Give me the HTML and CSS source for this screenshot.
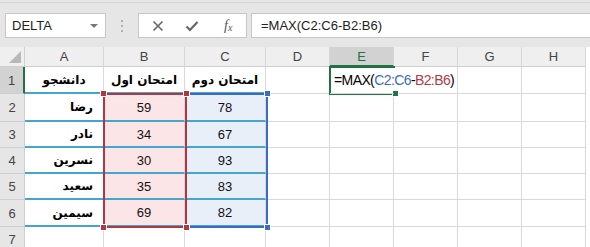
FILE: index.html
```html
<!DOCTYPE html>
<html lang="en">
<head>
  <meta charset="UTF-8">
  <title>Sheet</title>
  <link rel="stylesheet" href="styles.css">
</head>
<body>

  <div class="toolbar">
    <div class="namebox">
      <span>DELTA</span>
      <span class="caret"></span>
    </div>
    <div class="grip"><i></i><i></i><i></i></div>
    <div class="fnbox">
      <svg width="12" height="12" viewBox="0 0 12 12"><path d="M1.5 1.5 L10.5 10.5 M10.5 1.5 L1.5 10.5" stroke="#666" stroke-width="1.6" fill="none"/></svg>
      <svg width="14" height="12" viewBox="0 0 14 12"><path d="M1.5 6.5 L5 10 L12.5 2" stroke="#666" stroke-width="2.2" fill="none"/></svg>
      <span class="fx">f<sub>x</sub></span>
    </div>
    <div class="formula">=MAX(C2:C6-B2:B6)</div>
  </div>

  <div class="sheet">
    <div class="grid">
      <!-- header row -->
      <div class="corner"><span></span></div>
      <div class="colhead">A</div>
      <div class="colhead">B</div>
      <div class="colhead">C</div>
      <div class="colhead">D</div>
      <div class="colhead active">E</div>
      <div class="colhead">F</div>
      <div class="colhead">G</div>
      <div class="colhead">H</div>

      <!-- row 1 -->
      <div class="rowhead active">1</div>
      <div class="cell ar tbl center">دانشجو</div>
      <div class="cell ar tbl center">امتحان اول</div>
      <div class="cell ar tbl center">امتحان دوم</div>
      <div class="cell"></div>
      <div class="cell edit">=MAX(<span class="ref-c">C2:C6</span>-<span class="ref-b">B2:B6</span>)<span class="cursor"></span></div>
      <div class="cell"></div>
      <div class="cell"></div>
      <div class="cell"></div>

      <!-- row 2 -->
      <div class="rowhead">2</div>
      <div class="cell ar tbl name">رضا</div>
      <div class="cell tbl num pink">59</div>
      <div class="cell tbl num blue">78</div>
      <div class="cell"></div><div class="cell"></div><div class="cell"></div><div class="cell"></div><div class="cell"></div>

      <!-- row 3 -->
      <div class="rowhead">3</div>
      <div class="cell ar tbl name">نادر</div>
      <div class="cell tbl num pink">34</div>
      <div class="cell tbl num blue">67</div>
      <div class="cell"></div><div class="cell"></div><div class="cell"></div><div class="cell"></div><div class="cell"></div>

      <!-- row 4 -->
      <div class="rowhead">4</div>
      <div class="cell ar tbl name">نسرین</div>
      <div class="cell tbl num pink">30</div>
      <div class="cell tbl num blue">93</div>
      <div class="cell"></div><div class="cell"></div><div class="cell"></div><div class="cell"></div><div class="cell"></div>

      <!-- row 5 -->
      <div class="rowhead">5</div>
      <div class="cell ar tbl name">سعید</div>
      <div class="cell tbl num pink">35</div>
      <div class="cell tbl num blue">83</div>
      <div class="cell"></div><div class="cell"></div><div class="cell"></div><div class="cell"></div><div class="cell"></div>

      <!-- row 6 -->
      <div class="rowhead">6</div>
      <div class="cell ar tbl name">سیمین</div>
      <div class="cell tbl num pink">69</div>
      <div class="cell tbl num blue">82</div>
      <div class="cell"></div><div class="cell"></div><div class="cell"></div><div class="cell"></div><div class="cell"></div>

      <!-- row 7 -->
      <div class="rowhead">7</div>
      <div class="cell"></div><div class="cell"></div><div class="cell"></div><div class="cell"></div>
      <div class="cell"></div><div class="cell"></div><div class="cell"></div><div class="cell"></div>
    </div>

    <!-- range highlights drawn over the grid -->
    <div class="range range-c">
      <i class="dot tr"></i><i class="dot br"></i>
    </div>
    <div class="range range-b">
      <i class="dot tl"></i><i class="dot tr"></i><i class="dot bl"></i><i class="dot br"></i>
    </div>
    <div class="selection"><i class="handle"></i></div>
  </div>

</body>
</html>
```

FILE: styles.css
```css
* {
  margin: 0;
  padding: 0;
  box-sizing: border-box;
}

body {
  width: 590px;
  height: 247px;
  overflow: hidden;
  background: #e6e6e6;
  font-family: 'Liberation Sans', Arial, sans-serif;
  color: #000;
}

/* formula toolbar */
.toolbar {
  margin-top: 2px;
  height: 45px;
  border-top: 1px solid #d4d4d4;
  display: flex;
  align-items: flex-start;
  padding: 10px 0 0 5px;
  white-space: nowrap;
}

.namebox {
  width: 101px;
  height: 25px;
  background: #fff;
  border: 1px solid #c6c6c6;
  display: flex;
  align-items: center;
  justify-content: space-between;
  padding: 0 7px 0 6px;
  font-size: 13px;
  color: #222;
}

.caret {
  width: 0;
  height: 0;
  border-left: 4px solid transparent;
  border-right: 4px solid transparent;
  border-top: 4px solid #777;
}

.grip {
  width: 32px;
  height: 25px;
  display: flex;
  flex-direction: column;
  align-items: center;
  justify-content: center;
  gap: 3px;
}

.grip i {
  width: 2px;
  height: 2px;
  background: #b0b0b0;
}

.fnbox {
  width: 109px;
  height: 25px;
  background: #fff;
  border: 1px solid #c6c6c6;
  display: flex;
  align-items: center;
  padding-left: 13px;
  gap: 21px;
}

.fx {
  font-family: 'Liberation Serif', serif;
  font-style: italic;
  font-size: 14px;
  color: #555;
  margin-left: 4px;
}

.fx sub {
  font-size: 10px;
  vertical-align: -1px;
}

.formula {
  flex: 1;
  margin-left: 4px;
  height: 25px;
  background: #fff;
  border: 1px solid #c6c6c6;
  border-right: none;
  padding-left: 9px;
  line-height: 23px;
  font-size: 13px;
  color: #222;
}

/* sheet */
.sheet {
  position: relative;
  background: #fff;
  height: 200px;
}

.grid {
  display: grid;
  grid-template-columns: 25px 79px 81px 81px 64px 64px 64px 64px 64px;
  grid-template-rows: 20px 27px 28px 26px 26px 26px 27px 26px;
}

.corner,
.colhead,
.rowhead {
  background: #e6e6e6;
  color: #444;
  font-size: 13px;
  display: flex;
  align-items: center;
  justify-content: center;
  border-right: 1px solid #cfcfcf;
  border-bottom: 1px solid #cfcfcf;
}

.colhead {
  background: #efefef;
  border-right-color: #d6d6d6;
}

.colhead.active {
  background: #d2d2d2;
  color: #217346;
  border-bottom: 2px solid #217346;
}

.rowhead {
  background: #e6e6e6;
}

.rowhead.active {
  background: #d2d2d2;
  border-right: 2px solid #217346;
}

.corner {
  position: relative;
  background: #efefef;
}

.corner span {
  position: absolute;
  right: 3px;
  bottom: 3px;
  width: 0;
  height: 0;
  border-left: 12px solid transparent;
  border-bottom: 12px solid #b8b8b8;
}

.cell {
  border-right: 1px solid #d9d9d9;
  border-bottom: 1px solid #d9d9d9;
  font-size: 13px;
  display: flex;
  align-items: center;
  white-space: nowrap;
}

.tbl {
  border-bottom: 2px solid #45a5cf;
}

.ar {
  font-family: 'DejaVu Sans', sans-serif;
  font-weight: bold;
  font-size: 12px;
  direction: rtl;
}

.center {
  justify-content: center;
}

.name {
  justify-content: flex-start;
  padding-right: 10px;
}

.num {
  justify-content: center;
  font-size: 13px;
  color: #111;
}

.pink {
  background: #fbe5e6;
}

.blue {
  background: #e9eff9;
}

.edit {
  padding-left: 4px;
  overflow: visible;
  position: relative;
  z-index: 2;
  border-right-color: transparent;
  font-size: 14px;
  letter-spacing: -0.6px;
}

.ref-c {
  color: #3d6cc0;
}

.ref-b {
  color: #b23b44;
}

.cursor {
  display: inline-block;
  width: 1px;
  height: 18px;
  background: #000;
  margin-left: 3px;
}

/* range highlights */
.range {
  position: absolute;
  top: 46px;
  height: 135px;
  border: 2px solid;
}

.range-b {
  left: 103px;
  width: 84px;
  border-color: #b2363f;
}

.range-c {
  left: 185px;
  width: 83px;
  border-color: #3c6cc2;
}

.dot {
  position: absolute;
  width: 5px;
  height: 5px;
  border: 1px solid #fff;
  box-sizing: content-box;
}

.range-b .dot { background: #b2363f; }
.range-c .dot { background: #3c6cc2; }

.dot.tl { left: -5px; top: -5px; }
.dot.tr { right: -5px; top: -5px; }
.dot.bl { left: -5px; bottom: -5px; }
.dot.br { right: -5px; bottom: -5px; }

.selection {
  position: absolute;
  left: 329px;
  top: 19px;
  width: 66px;
  height: 29px;
  border: 2px solid #217346;
  border-right: none;
}

.handle {
  position: absolute;
  right: -4px;
  bottom: -4px;
  width: 5px;
  height: 5px;
  background: #217346;
  border: 1px solid #fff;
  box-sizing: content-box;
}
```
